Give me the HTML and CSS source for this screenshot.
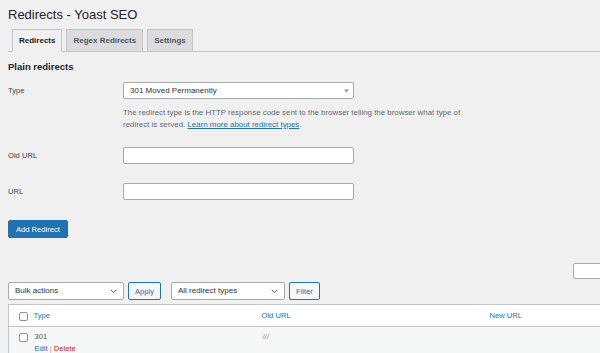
FILE: index.html
```html
<!DOCTYPE html>
<html lang="en">
<head>
    <meta charset="UTF-8">
    <meta name="viewport" content="width=device-width, initial-scale=1.0">
    <title>Redirects - Yoast SEO</title>
    <link rel="stylesheet" href="styles.css">
</head>
<body>
    <div class="wrap">
        <h1 class="page-title">Redirects - Yoast SEO</h1>

        <nav class="nav-tabs">
            <a href="#" class="nav-tab active">Redirects</a>
            <a href="#" class="nav-tab">Regex Redirects</a>
            <a href="#" class="nav-tab">Settings</a>
        </nav>

        <!-- Plain redirect form -->
        <section class="plain-form">
            <h2>Plain redirects</h2>

            <div class="form-row row-type">
                <label class="form-label">Type</label>
                <div class="field">
                    <div class="select select-type">
                        <span>301 Moved Permanently</span>
                        <svg width="5" height="4" viewBox="0 0 5 4"><path d="M0 0.5h5L2.5 3.5z" fill="#8c8f94"/></svg>
                    </div>
                    <p class="description">The redirect type is the HTTP response code sent to the browser telling the browser what type of redirect is served. <a href="#">Learn more about redirect types</a>.</p>
                </div>
            </div>

            <div class="form-row row-old">
                <label class="form-label">Old URL</label>
                <div class="field"><input type="text" class="text-input"></div>
            </div>

            <div class="form-row row-url">
                <label class="form-label">URL</label>
                <div class="field"><input type="text" class="text-input"></div>
            </div>

            <button class="button-primary">Add Redirect</button>
        </section>

        <!-- List of redirects -->
        <div class="search-box">
            <input type="search" class="search-input">
        </div>

        <div class="tablenav">
            <div class="select select-nav">
                <span>Bulk actions</span>
                <svg width="7" height="5" viewBox="0 0 7 5"><path d="M0.7 0.8l2.8 2.8 2.8-2.8" fill="none" stroke="#50575e" stroke-width="1"/></svg>
            </div>
            <button class="button-secondary">Apply</button>
            <div class="select select-nav select-types">
                <span>All redirect types</span>
                <svg width="7" height="5" viewBox="0 0 7 5"><path d="M0.7 0.8l2.8 2.8 2.8-2.8" fill="none" stroke="#50575e" stroke-width="1"/></svg>
            </div>
            <button class="button-secondary">Filter</button>
        </div>

        <table class="redirects-table">
            <colgroup>
                <col class="col-cb">
                <col class="col-type">
                <col class="col-old">
                <col>
            </colgroup>
            <thead>
                <tr>
                    <th class="check-column"><span class="checkbox"></span></th>
                    <th><a href="#">Type</a></th>
                    <th><a href="#">Old URL</a></th>
                    <th><a href="#">New URL</a></th>
                </tr>
            </thead>
            <tbody>
                <tr>
                    <td class="check-column"><span class="checkbox"></span></td>
                    <td>
                        <div>301</div>
                        <div class="row-actions"><a href="#">Edit</a> <span class="sep">|</span> <a href="#" class="delete">Delete</a></div>
                    </td>
                    <td><span class="slashes">///</span></td>
                    <td></td>
                </tr>
            </tbody>
        </table>
    </div>
</body>
</html>
```

FILE: styles.css
```css
* {
    margin: 0;
    padding: 0;
    box-sizing: border-box;
    font-family: 'Liberation Sans', Arial, sans-serif;
}

html,
body {
    overflow: hidden;
}

body {
    background-color: #f0f0f1;
    color: #3c434a;
    font-size: 7.6px;
    line-height: 12px;
}

a {
    color: #2271b1;
    text-decoration: none;
}

.wrap {
    width: 688px;
    padding-left: 8px;
}

.page-title {
    margin-top: 7px;
    font-size: 13px;
    line-height: 16px;
    font-weight: 400;
    color: #1d2327;
}

/* Tabs */
.nav-tabs {
    display: flex;
    gap: 4px;
    margin-top: 6px;
    padding-left: 4px;
    border-bottom: 1px solid #c3c4c7;
}

.nav-tab {
    margin-bottom: -1px;
    padding: 0 6px;
    font-size: 8px;
    line-height: 21px;
    font-weight: bold;
    color: #50575e;
    background: #dcdcde;
    border: 1px solid #c3c4c7;
}

.nav-tab.active {
    color: #1d2327;
    background: #f0f0f1;
    border-bottom-color: #f0f0f1;
}

/* Form */
.plain-form h2 {
    margin-top: 9px;
    font-size: 9.5px;
    line-height: 12px;
    color: #1d2327;
}

.form-row {
    display: flex;
    align-items: flex-start;
}

.form-label {
    width: 115px;
    flex-shrink: 0;
    line-height: 17px;
    color: #3c434a;
}

.field {
    width: 231px;
}

.row-type {
    margin-top: 9px;
}

.row-old {
    margin-top: 16px;
}

.row-url {
    margin-top: 19px;
}

.select {
    display: flex;
    align-items: center;
    justify-content: space-between;
    height: 17px;
    padding: 0 6px;
    background: white;
    border: 1px solid #a7aaad;
    border-radius: 2px;
    font-size: 8px;
    color: #2c3338;
}

.select-type {
    width: 231px;
    padding-right: 4px;
}

.description {
    width: 350px;
    margin-top: 8px;
    font-size: 7.9px;
    color: #646970;
}

.description a {
    text-decoration: underline;
}

.text-input {
    display: block;
    width: 231px;
    height: 17px;
    background: white;
    border: 1px solid #a7aaad;
    border-radius: 2px;
    outline: none;
}

.button-primary {
    display: block;
    margin-top: 20px;
    height: 18px;
    padding: 0 7px;
    font-size: 7.6px;
    color: white;
    background: #2271b1;
    border: 1px solid #2271b1;
    border-radius: 2px;
}

/* List table */
.search-box {
    display: flex;
    justify-content: flex-end;
    margin-top: 25px;
}

.search-input {
    width: 115px;
    height: 16px;
    background: white;
    border: 1px solid #a7aaad;
    border-radius: 2px;
    outline: none;
}

.tablenav {
    display: flex;
    align-items: center;
    margin-top: 3px;
    height: 18px;
}

.select-nav {
    width: 116px;
    height: 18px;
    margin-right: 4px;
}

.select-nav.select-types {
    width: 114px;
    margin-left: 10px;
}

.button-secondary {
    height: 18px;
    padding: 0 6px;
    font-size: 7.6px;
    color: #2271b1;
    background: #f6f7f7;
    border: 1px solid #2271b1;
    border-radius: 2px;
}

.redirects-table {
    width: 100%;
    margin-top: 4px;
    table-layout: fixed;
    border-collapse: collapse;
    border: 1px solid #c3c4c7;
}

.col-cb {
    width: 23px;
}

.col-type,
.col-old {
    width: 228px;
}

.redirects-table th {
    height: 20px;
    padding: 0 2px;
    text-align: left;
    font-weight: normal;
    line-height: 21px;
    background: white;
    border-bottom: 1px solid #c3c4c7;
}

.redirects-table td {
    padding: 4px 2px 0 3px;
    vertical-align: top;
    background: #f6f7f7;
    color: #50575e;
}

.redirects-table .check-column {
    padding-left: 10px;
    padding-right: 0;
}

.checkbox {
    display: block;
    width: 9px;
    height: 9px;
    background: white;
    border: 1px solid #8c8f94;
    border-radius: 2px;
}

th .checkbox {
    margin-top: 1px;
}

td .checkbox {
    margin-top: 2px;
}

.row-actions .sep {
    color: #a7aaad;
}

.row-actions .delete {
    color: #b32d2e;
}

.slashes {
    font-style: italic;
    color: #8c8f94;
}
```
